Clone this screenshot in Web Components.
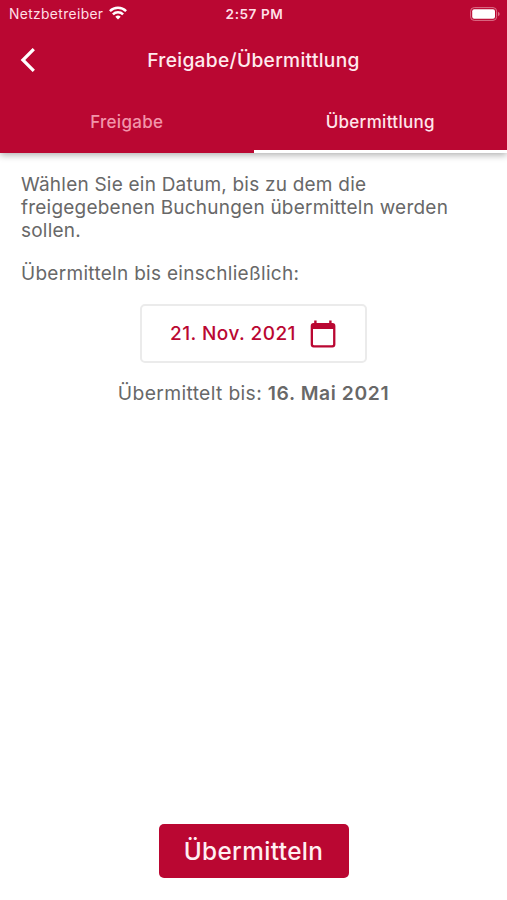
<!DOCTYPE html>
<html lang="de">
<head>
  <meta charset="UTF-8">
  <meta name="viewport" content="width=device-width, initial-scale=1.0">
  <title>Freigabe/Übermittlung</title>
  <style>
    :root {
      --primary-color: #ba0732;
      --text-color: #686868;
      --border-color: #ebebeb;
    }

    body {
      margin: 0;
      background-color: #fff;
      color: var(--text-color);
      font-family: Inter, "Liberation Sans", sans-serif;
    }
  </style>
</head>
<body>
  <transfer-screen></transfer-screen>

  <script>
    class StatusBar extends HTMLElement {
      constructor() {
        super();
        this.attachShadow({ mode: 'open' });
        this.render();
      }

      render() {
        this.shadowRoot.innerHTML = `
          <style>
            :host {
              display: grid;
              grid-template-columns: 1fr auto 1fr;
              align-items: center;
              height: 28px;
              padding: 0 7px 0 9px;
              color: #ffdfe6;
              font-size: 13.8px;
            }

            .carrier {
              display: flex;
              align-items: center;
              gap: 6px;
              letter-spacing: 0.37px;
            }

            .carrier svg {
              margin-top: -2px;
            }

            .time {
              font-weight: 600;
              font-size: 13.6px;
              letter-spacing: 0.55px;
            }

            .battery {
              justify-self: end;
              margin-top: -1px;
            }

            svg {
              display: block;
            }
          </style>

          <div class="carrier">
            <slot name="carrier"></slot>
            <svg width="18" height="14" viewBox="0 0 18 14" fill="none" stroke="#fff" stroke-width="2.5">
              <path d="M0.9 5.1C5.4 0.7 12.6 0.7 17.1 5.1"/>
              <path d="M3.9 8.3C6.8 5.5 11.2 5.5 14.1 8.3"/>
              <path d="M9 13.5L6.3 10.7Q9 8.5 11.7 10.7Z" fill="#fff" stroke="none"/>
            </svg>
          </div>
          <div class="time"><slot name="time"></slot></div>
          <svg class="battery" width="30" height="14" viewBox="0 0 30 14">
            <rect x="0.6" y="0.6" width="26" height="12.8" rx="3.6" fill="none" stroke="#dc7189" stroke-width="1"/>
            <rect x="2.2" y="2.2" width="22.8" height="9.6" rx="2" fill="#fff"/>
            <path d="M28 4.8Q29.7 5.6 29.7 7T28 9.2Z" fill="#dc7189"/>
          </svg>
        `;
      }
    }

    customElements.define('status-bar', StatusBar);

    class NavBar extends HTMLElement {
      constructor() {
        super();
        this.attachShadow({ mode: 'open' });
        this.render();
      }

      render() {
        this.shadowRoot.innerHTML = `
          <style>
            :host {
              display: grid;
              grid-template-columns: 56px 1fr 56px;
              align-items: center;
              height: 64px;
              color: #ffeaee;
            }

            button {
              padding: 0 0 0 20px;
              border: none;
              background: none;
              cursor: pointer;
            }

            svg {
              display: block;
            }

            h1 {
              margin: 0;
              text-align: center;
              font-size: 19.2px;
              font-weight: 500;
              line-height: 24px;
              letter-spacing: 0.3px;
            }
          </style>

          <button aria-label="Zurück">
            <svg width="16" height="24" viewBox="0 0 16 24" fill="none" stroke="#fff" stroke-width="3.2">
              <path d="M13.8 1.1L2.9 12L13.8 22.9"/>
            </svg>
          </button>
          <h1><slot></slot></h1>
        `;
      }
    }

    customElements.define('nav-bar', NavBar);

    class TabItem extends HTMLElement {
      constructor() {
        super();
        this.attachShadow({ mode: 'open' });
        this.render();
      }

      render() {
        this.shadowRoot.innerHTML = `
          <style>
            :host {
              display: flex;
              flex: 1;
              box-sizing: border-box;
              align-items: center;
              justify-content: center;
              height: 61px;
              padding-top: 2px;
              border-bottom: 3px solid transparent;
              color: #f295aa;
              font-size: 17px;
              font-weight: 500;
              letter-spacing: 0.3px;
              cursor: pointer;
            }

            :host([active]) {
              border-bottom-color: #fff;
              color: #ffe6eb;
            }
          </style>

          <slot></slot>
        `;
      }
    }

    customElements.define('tab-item', TabItem);

    class AppHeader extends HTMLElement {
      constructor() {
        super();
        this.attachShadow({ mode: 'open' });
        this.render();
      }

      render() {
        this.shadowRoot.innerHTML = `
          <style>
            :host {
              display: block;
              background-color: var(--primary-color);
              box-shadow: 0 2px 7px rgba(0, 0, 0, 0.32);
            }

            .tabs {
              display: flex;
            }
          </style>

          <slot></slot>
          <div class="tabs"><slot name="tab"></slot></div>
        `;
      }
    }

    customElements.define('app-header', AppHeader);

    class DateField extends HTMLElement {
      constructor() {
        super();
        this.attachShadow({ mode: 'open' });
        this.render();
      }

      render() {
        this.shadowRoot.innerHTML = `
          <style>
            :host {
              display: flex;
              box-sizing: border-box;
              align-items: center;
              justify-content: space-between;
              width: 227px;
              height: 59px;
              padding: 0 29px 0 28px;
              border: 2px solid var(--border-color);
              border-radius: 5px;
              color: var(--primary-color);
              font-size: 19px;
              font-weight: 500;
              letter-spacing: 0.45px;
              white-space: nowrap;
              cursor: pointer;
            }

            svg {
              display: block;
            }
          </style>

          <slot></slot>
          <svg width="26" height="28" viewBox="0 0 26 28" fill="var(--primary-color)">
            <path fill-rule="evenodd" d="M4.2 0.5H6.6V3H19.2V0.5H21.6V3H22.5A3 3 0 0 1 25.4 6V24.6A3 3 0 0 1 22.5 27.5H3.6A3 3 0 0 1 0.7 24.6V6A3 3 0 0 1 3.6 3H4.2ZM3 9V24.2Q3 25.3 4.1 25.3H22Q23.1 25.3 23.1 24.2V9Z"/>
          </svg>
        `;
      }
    }

    customElements.define('date-field', DateField);

    class PrimaryButton extends HTMLElement {
      constructor() {
        super();
        this.attachShadow({ mode: 'open' });
        this.render();
      }

      render() {
        this.shadowRoot.innerHTML = `
          <style>
            :host {
              display: block;
            }

            button {
              width: 190px;
              height: 54px;
              padding: 0;
              border: none;
              border-radius: 5px;
              background-color: var(--primary-color);
              color: #ffeff2;
              font: 500 24.3px Inter, "Liberation Sans", sans-serif;
              letter-spacing: 0.4px;
              cursor: pointer;
            }
          </style>

          <button><slot></slot></button>
        `;
      }
    }

    customElements.define('primary-button', PrimaryButton);

    class TransferScreen extends HTMLElement {
      constructor() {
        super();
        this.attachShadow({ mode: 'open' });
        this.render();
      }

      render() {
        this.shadowRoot.innerHTML = `
          <style>
            :host {
              display: flex;
              flex-direction: column;
              box-sizing: border-box;
              height: 100vh;
              padding-bottom: 22px;
            }

            main {
              display: flex;
              flex: 1;
              flex-direction: column;
              padding: 20px 21px 0;
              font-size: 19px;
              line-height: 23px;
              letter-spacing: 0.22px;
            }

            p {
              margin: 0 0 20px;
            }

            .label {
              margin-bottom: 19px;
              letter-spacing: 0.3px;
            }

            date-field {
              align-self: center;
              margin-bottom: 19px;
            }

            .last {
              text-align: center;
              font-size: 19.3px;
              letter-spacing: 0.35px;
            }

            .last b {
              font-weight: 600;
              letter-spacing: 0.6px;
            }

            primary-button {
              align-self: center;
            }
          </style>

          <app-header>
            <status-bar>
              <span slot="carrier">Netzbetreiber</span>
              <span slot="time">2:57 PM</span>
            </status-bar>
            <nav-bar>Freigabe/Übermittlung</nav-bar>
            <tab-item slot="tab">Freigabe</tab-item>
            <tab-item slot="tab" active>Übermittlung</tab-item>
          </app-header>
          <main>
            <p class="intro">Wählen Sie ein Datum, bis zu dem die<br>freigegebenen Buchungen übermitteln werden<br>sollen.</p>
            <p class="label">Übermitteln bis einschließlich:</p>
            <date-field>21. Nov. 2021</date-field>
            <p class="last">Übermittelt bis: <b>16. Mai 2021</b></p>
          </main>
          <primary-button>Übermitteln</primary-button>
        `;
      }
    }

    customElements.define('transfer-screen', TransferScreen);
  </script>
</body>
</html>
